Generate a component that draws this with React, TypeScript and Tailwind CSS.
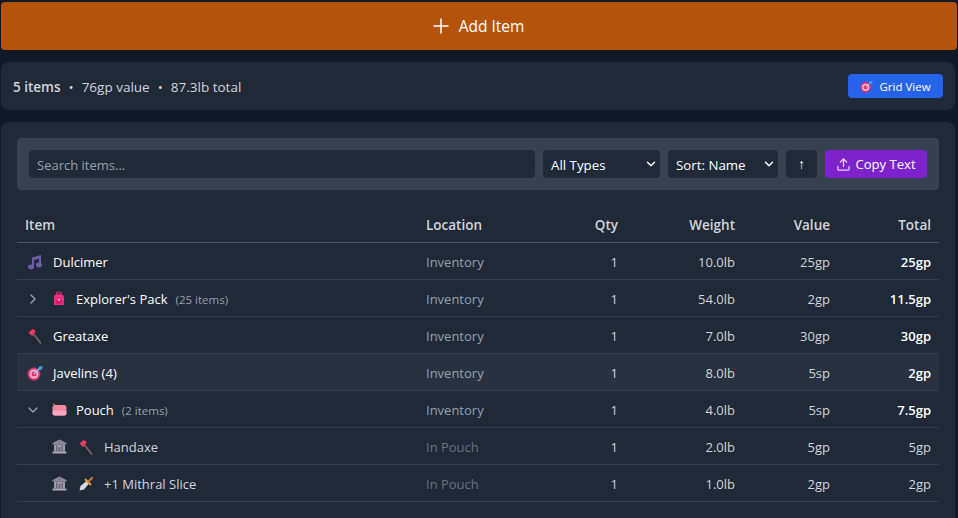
import { ChevronDown, ChevronRight, Plus, Upload } from "lucide-react";

const font = { fontFamily: '"Open Sans", "Noto Sans", sans-serif' };

function Music() {
  return (
    <svg width="16" height="16" viewBox="0 0 16 16">
      <path d="M5 3.5 14 1v10h-2V4.6L7 6v7H5z" fill="#6d5ba8" />
      <ellipse cx="4" cy="13" rx="3" ry="2.4" fill="#6d5ba8" />
      <ellipse cx="12" cy="11" rx="3" ry="2.4" fill="#6d5ba8" />
    </svg>
  );
}

function Pack() {
  return (
    <svg width="12" height="15" viewBox="0 0 13 15">
      <path d="M4 3V1h5v2" fill="none" stroke="#b5345f" strokeWidth="1.5" />
      <path d="M1 6c0-2.500 2-3.500 5.500-3.500S12 3.500 12 6v7.500c0 .8-.5 1-1 1H2c-.5 0-1-.2-1-1z" fill="#f0307f" />
      <rect x="2.500" y="9" width="8" height="4.500" rx="1" fill="#d81f6a" />
      <rect x="5.500" y="8" width="2" height="2" fill="#ffb3d1" />
    </svg>
  );
}

function Axe() {
  return (
    <svg width="14" height="16" viewBox="0 0 14 16">
      <path d="M5 5 12.500 15" stroke="#7f615c" strokeWidth="1.800" strokeLinecap="round" />
      <path d="M.5 4.500 5 .8l3 3-2.500 1.700-1 3z" fill="#f03a66" />
    </svg>
  );
}

function Target({ size = 16 }: { size?: number }) {
  return (
    <svg width={size} height={size} viewBox="0 0 16 16">
      <circle cx="7" cy="9" r="6.500" fill="#e0336f" />
      <circle cx="7" cy="9" r="4.500" fill="#f6b8cf" />
      <circle cx="7" cy="9" r="2.500" fill="#e0336f" />
      <path d="M7 9 13 3" stroke="#9cc7e8" strokeWidth="1.200" />
      <path d="M12 1.500 15.500 1 15 4.500 12.500 5 11.500 4z" fill="#3f9fe8" />
    </svg>
  );
}

function Purse() {
  return (
    <svg width="15" height="13" viewBox="0 0 15 13">
      <path d="M1.500 .5 3 3" stroke="#c9a227" strokeWidth="1.200" />
      <rect x="0.500" y="2" width="14" height="10.500" rx="2.500" fill="#ee8a9e" />
      <rect x="0.500" y="7.500" width="14" height="5" rx="2.500" fill="#f7a6c4" />
    </svg>
  );
}

function Bank() {
  return (
    <svg width="15" height="15" viewBox="0 0 15 15">
      <path d="M7.500 0.500 14.500 4v1.500H.5V4z" fill="#8f8a99" />
      <path d="M7 2h1v2H7z" fill="#7c5bb0" />
      <path d="M2 5.500h11v7H2z" fill="#a09ba8" />
      <path d="M4 6.500h1.500v6H4zM9.500 6.500H11v6H9.500zM6.500 8h2v4.500h-2z" fill="#6c6876" />
      <path d="M.5 12.500h14v2H.5z" fill="#b0abb8" />
    </svg>
  );
}

function Dagger() {
  return (
    <svg width="15" height="15" viewBox="0 0 15 15">
      <path d="M.5 14.500 1.500 10 8 4.500 10.500 7 5 13.500z" fill="#d5dbe3" />
      <path d="M6.500 3.500 11.500 8.500" stroke="#e8a33a" strokeWidth="1.800" strokeLinecap="round" />
      <path d="M9.500 5.500 13 2" stroke="#c9773a" strokeWidth="2.200" strokeLinecap="round" />
    </svg>
  );
}

type Row = {
  name: string;
  icon: React.ReactNode;
  weight: string;
  value: string;
  total: string;
  count?: string;
  toggle?: "open" | "closed";
  child?: boolean;
  hover?: boolean;
};

const rows: Row[] = [
  { name: "Dulcimer", icon: <Music />, weight: "10.0lb", value: "25gp", total: "25gp" },
  { name: "Explorer's Pack", icon: <Pack />, count: "(25 items)", toggle: "closed", weight: "54.0lb", value: "2gp", total: "11.5gp" },
  { name: "Greataxe", icon: <Axe />, weight: "7.0lb", value: "30gp", total: "30gp" },
  { name: "Javelins (4)", icon: <Target />, weight: "8.0lb", value: "5sp", total: "2gp", hover: true },
  { name: "Pouch", icon: <Purse />, count: "(2 items)", toggle: "open", weight: "4.0lb", value: "5sp", total: "7.5gp" },
  { name: "Handaxe", icon: <Axe />, child: true, weight: "2.0lb", value: "5gp", total: "5gp" },
  { name: "+1 Mithral Slice", icon: <Dagger />, child: true, weight: "1.0lb", value: "2gp", total: "2gp" },
];

function ItemCell({ row }: { row: Row }) {
  if (row.child) {
    return (
      <div className="-mt-[2px] flex items-center pl-[26px]">
        <span className="mr-[11px] flex w-4 justify-center"><Bank /></span>
        <span className="mr-[10px] flex w-4 justify-center">{row.icon}</span>
        <span className="pt-[2px] text-[#d1d5db]">{row.name}</span>
      </div>
    );
  }
  if (row.toggle) {
    return (
      <div className="-mt-[2px] flex items-center">
        <span className="flex w-[26px] text-gray-400">
          {row.toggle === "open" ? <ChevronDown size={16} /> : <ChevronRight size={16} />}
        </span>
        <span className="mr-[9px] flex w-4 justify-center">{row.icon}</span>
        <span className="pt-[2px] font-medium text-white">{row.name}</span>
        <span className="ml-2 pt-[2px] text-[11.500px] text-gray-400">{row.count}</span>
      </div>
    );
  }
  return (
    <div className="-mt-[2px] flex items-center pl-[2px]">
      <span className="mr-[10px] flex w-4 justify-center">{row.icon}</span>
      <span className="pt-[2px] font-medium text-white">{row.name}</span>
    </div>
  );
}

export default function App() {
  return (
    <div className="h-[518px] overflow-hidden bg-[#111827] px-px pt-[2px] text-[13px]" style={font}>
      <button className="flex h-12 w-full items-center justify-center gap-[6px] rounded bg-[#b45309] pr-[5px] text-[15.500px] font-medium text-white">
        <Plus size={24} strokeWidth={1.500} />
        <span className="pt-[2px]">Add Item</span>
      </button>

      <div className="mr-[2px] mt-3 flex h-12 items-center justify-between rounded-lg bg-[#1f2937] pl-3 pr-3 text-[#d1d5db]">
        <div className="flex items-center gap-2 pt-[2px] text-[13.500px]">
          <span className="font-semibold">5 items</span>
          <span>•</span>
          <span>76gp value</span>
          <span>•</span>
          <span>87.3lb total</span>
        </div>
        <button className="flex h-6 w-[95px] items-center justify-center gap-[6px] rounded bg-[#2563eb] text-[11.500px] text-white">
          <Target size={13} />
          <span className="pt-[2px]">Grid View</span>
        </button>
      </div>

      <div className="mr-[2px] mt-3 h-[420px] rounded-lg bg-[#1f2937] px-4 pt-4">
        <div className="flex h-[52px] items-center gap-2 rounded bg-[#374151] px-3">
          <input
            placeholder="Search items..."
            className="h-7 min-w-0 flex-1 rounded bg-[#1f2937] px-2 pt-px text-[13px] text-white outline-none placeholder:text-gray-400"
          />
          <div className="flex h-7 w-[117px] items-center justify-between rounded bg-[#1f2937] pl-2 pr-[2px] text-[13.300px] text-white">
            <span className="pt-1">All Types</span>
            <ChevronDown size={14} strokeWidth={2.500} />
          </div>
          <div className="flex h-7 w-[110px] items-center justify-between rounded bg-[#1f2937] pl-2 pr-[2px] text-[13.300px] text-white">
            <span className="pt-1">Sort: Name</span>
            <ChevronDown size={14} strokeWidth={2.500} />
          </div>
          <button className="h-7 w-[31px] rounded bg-[#1f2937] text-sm font-semibold text-white">↑</button>
          <button className="flex h-7 w-[102px] items-center justify-center gap-1 rounded bg-[#7e22ce] text-[13.100px] text-white">
            <Upload size={15} className="text-[#e9d5ff]" />
            <span className="pt-[2px]">Copy Text</span>
          </button>
        </div>

        <table className="mt-[18px] w-full table-fixed border-collapse">
          <thead>
            <tr className="h-[34px] border-b border-[#4b5563] text-left text-[13.500px] text-[#d1d5db]">
              <th className="w-[401px] px-2 font-semibold">Item</th>
              <th className="w-[142px] px-2 font-semibold">Location</th>
              <th className="w-[66px] px-2 text-right font-semibold">Qty</th>
              <th className="w-[117px] px-2 text-right font-semibold">Weight</th>
              <th className="w-[95px] px-2 text-right font-semibold">Value</th>
              <th className="px-2 text-right font-semibold">Total</th>
            </tr>
          </thead>
          <tbody>
            {rows.map((row) => (
              <tr
                key={row.name}
                className={row.hover ? "h-[37px] border-b border-[#374151] bg-[#273140]" : "h-[37px] border-b border-[#374151]"}
              >
                <td className="px-2 pt-1"><ItemCell row={row} /></td>
                <td className={row.child ? "px-2 pt-1 text-gray-500" : "px-2 pt-1 text-gray-400"}>
                  {row.child ? "In Pouch" : "Inventory"}
                </td>
                <td className="px-2 pt-1 text-right text-[#d1d5db]">1</td>
                <td className="px-2 pt-1 text-right text-[#d1d5db]">{row.weight}</td>
                <td className="px-2 pt-1 text-right text-[#d1d5db]">{row.value}</td>
                <td className={row.child ? "px-2 pt-1 text-right text-[#d1d5db]" : "px-2 pt-1 text-right font-semibold text-white"}>
                  {row.total}
                </td>
              </tr>
            ))}
          </tbody>
        </table>
      </div>
    </div>
  );
}
